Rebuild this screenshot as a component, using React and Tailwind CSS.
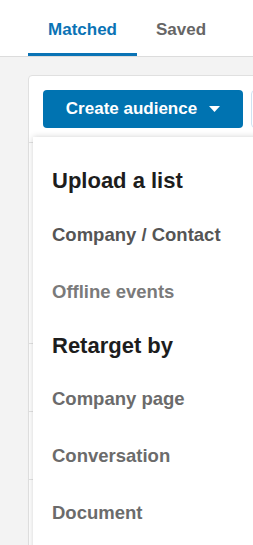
export default function App() {
  const rows = [0, 1, 2, 3, 4, 5]

  return (
    <div className="w-[253px] h-[545px] overflow-hidden bg-[#f3f3f3] font-['Liberation_Sans',Arial,sans-serif]">
      {/* tabs */}
      <div className="h-[57px] bg-white border-b border-[#dcdcdc] flex items-end pl-[28px]">
        <div className="w-[109px] h-full flex items-center justify-center border-b-[3px] border-[#0a73b5] text-[17px] font-bold text-[#0a73b5] pt-[6px]">
          Matched
        </div>
        <div className="h-full flex items-center px-[19px] text-[17px] font-bold text-[#666] pt-[3px]">
          Saved
        </div>
      </div>

      {/* card */}
      <div className="relative mt-[18px] ml-[28px] w-[260px] bg-white border border-[#e0e0e0] rounded-tl-[4px]">
        <div className="flex items-center gap-[8px] px-[14px] pt-[14px] pb-[14px]">
          <button className="shrink-0 w-[200px] h-[38px] rounded-[4px] bg-[#0073b1] text-white text-[17px] font-bold flex items-center justify-center gap-[12px]">
            Create audience
            <svg width="11" height="6" viewBox="0 0 11 6"><path d="M0 0h11L5.5 6z" fill="#fff" /></svg>
          </button>
          <div className="shrink-0 w-[40px] h-[38px] rounded-[4px] border border-[#cfe3f2] bg-white" />
        </div>
        <div className="border-t border-[#e3e3e3]">
          <div className="h-[201px] border-b border-[#e3e3e3]" />
          {rows.map(r => (
            <div key={r} className="h-[68px] border-b border-[#e3e3e3]" />
          ))}
        </div>

        {/* dropdown */}
        <div className="absolute left-[4px] top-[61px] w-[240px] h-[420px] bg-white shadow-[0_0_6px_rgba(0,0,0,0.18)] pl-[19px] pt-[30px]">
          <div className="text-[22px] font-bold text-[#1d1d1d] h-[28px] leading-[28px]">Upload a list</div>
          <div className="mt-[29px] text-[18.5px] font-bold text-[#555] leading-[22px]">Company / Contact</div>
          <div className="mt-[35px] text-[18.5px] font-bold text-[#7a7a7a] leading-[22px]">Offline events</div>
          <div className="mt-[29px] text-[22px] font-bold text-[#1d1d1d] leading-[28px]">Retarget by</div>
          <div className="mt-[28px] text-[18.5px] font-bold text-[#6b6b6b] leading-[22px]">Company page</div>
          <div className="mt-[35px] text-[18.5px] font-bold text-[#6b6b6b] leading-[22px]">Conversation</div>
          <div className="mt-[35px] text-[18.5px] font-bold text-[#6b6b6b] leading-[22px]">Document</div>
        </div>
      </div>
    </div>
  )
}
